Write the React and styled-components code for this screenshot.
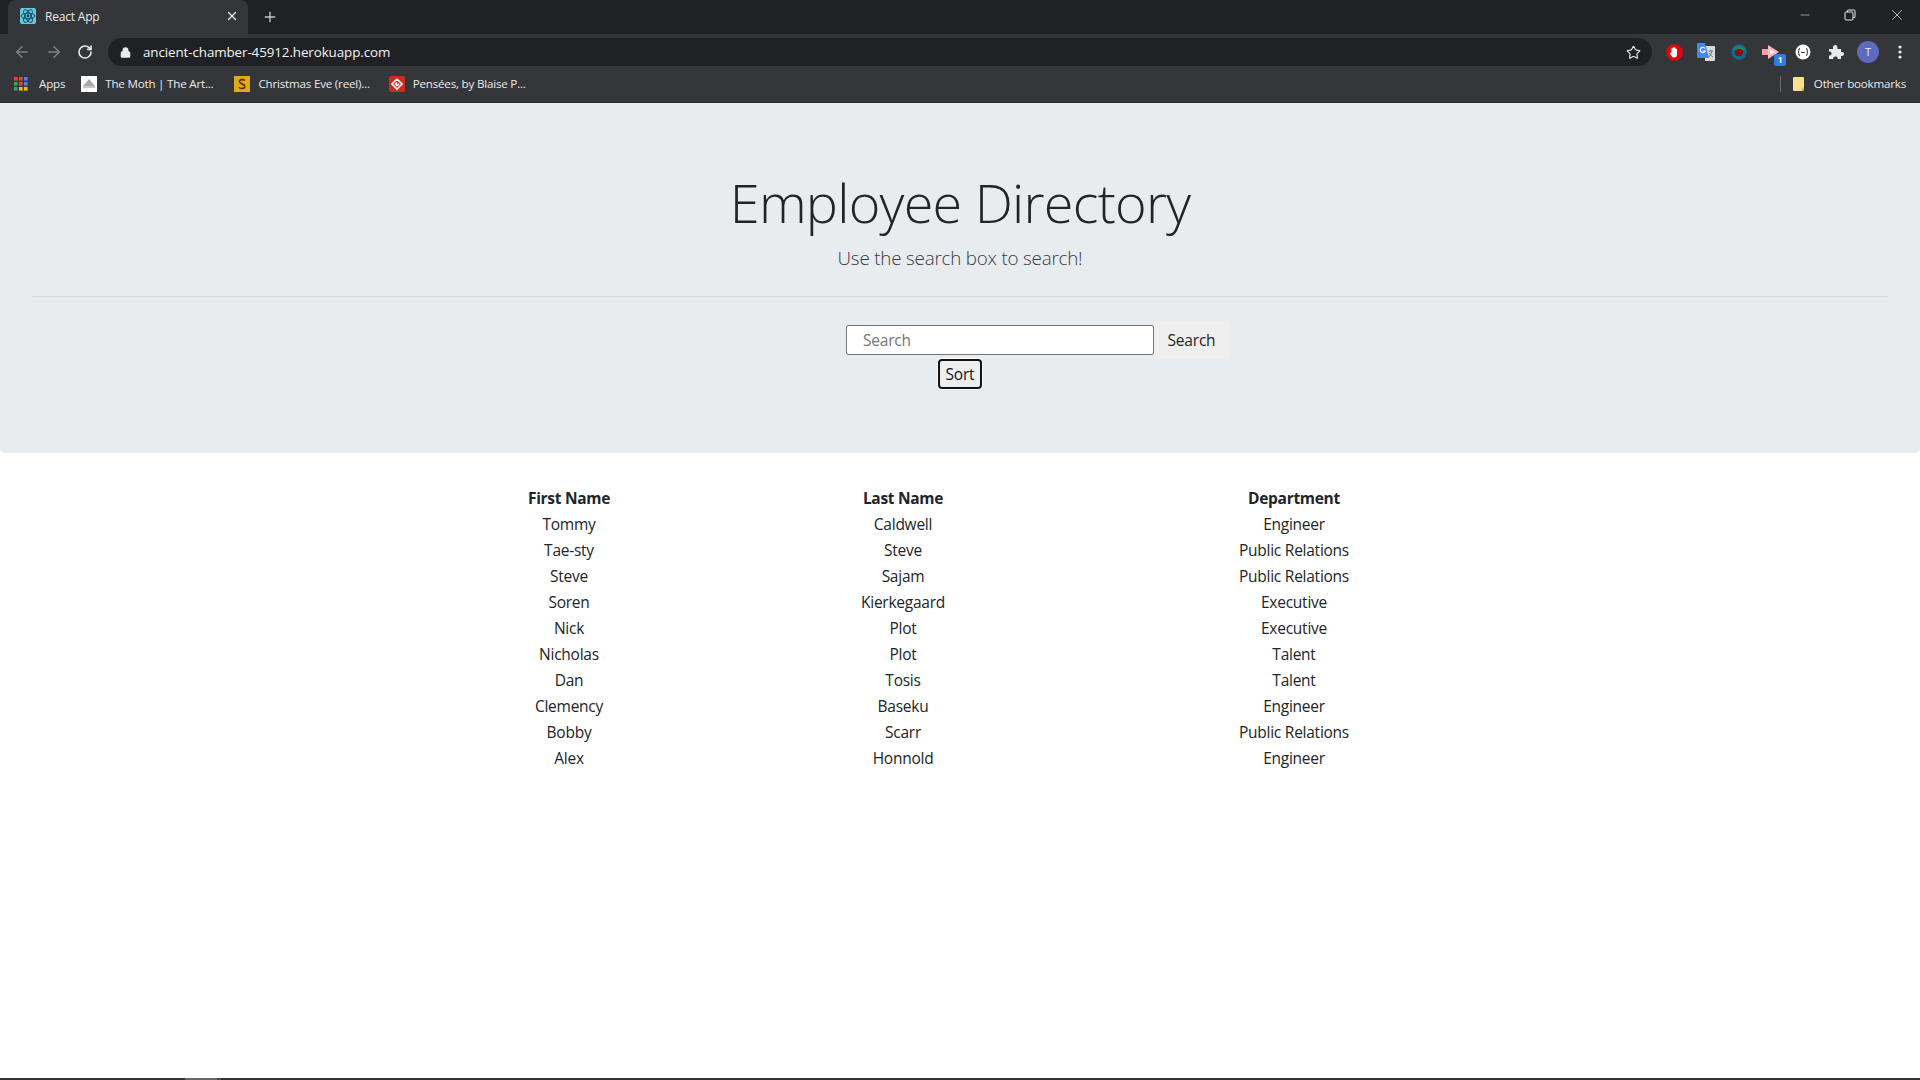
import React from "react";
import styled, { createGlobalStyle } from "styled-components";
import { ArrowLeft, ArrowRight, RotateCw, Lock, Star, Plus, X, Minus } from "lucide-react";

const employees = [
	["Tommy", "Caldwell", "Engineer"],
	["Tae-sty", "Steve", "Public Relations"],
	["Steve", "Sajam", "Public Relations"],
	["Soren", "Kierkegaard", "Executive"],
	["Nick", "Plot", "Executive"],
	["Nicholas", "Plot", "Talent"],
	["Dan", "Tosis", "Talent"],
	["Clemency", "Baseku", "Engineer"],
	["Bobby", "Scarr", "Public Relations"],
	["Alex", "Honnold", "Engineer"],
];

const GlobalStyle = createGlobalStyle`
	html, body {
		margin: 0;
		height: 100%;
		overflow: hidden;
		background: #fff;
	}
	body {
		font-family: "Open Sans", "Noto Sans", sans-serif;
	}
`;

const Page = styled.div`
	height: 1080px;
	display: flex;
	flex-direction: column;
`;

const Browser = styled.header`
	flex: none;
	background: #35363a;
	font-family: "Open Sans", "Noto Sans", sans-serif;
	color: #e8eaed;
`;

const TabStrip = styled.div`
	height: 34px;
	background: #202124;
	display: flex;
	align-items: flex-end;
	padding-left: 8px;
`;

const Tab = styled.div`
	width: 240px;
	height: 34px;
	background: #35363a;
	border-radius: 8px 8px 0 0;
	display: flex;
	align-items: center;
	padding: 0 9px 2px 12px;
	box-sizing: border-box;
	gap: 9px;
`;

const TabTitle = styled.span`
	flex: 1;
	font-size: 12px;
	letter-spacing: -0.2px;
`;

const NewTab = styled.div`
	margin: 0 0 1px 14px;
	height: 33px;
	display: flex;
	align-items: center;
`;

const WindowControls = styled.div`
	margin-left: auto;
	height: 30px;
	display: flex;
	align-items: center;
	gap: 32px;
	padding: 0 14px 4px 0;
	color: #e8eaed;
`;

const Toolbar = styled.div`
	height: 34px;
	box-sizing: border-box;
	display: flex;
	align-items: center;
	padding: 2px 0 0 13px;
`;

const NavButton = styled.div`
	width: ${(p) => (p.$active ? 31 : 32)}px;
	display: flex;
	color: ${(p) => (p.$active ? "#e8eaed" : "#7d7f83")};
`;

const AddressBar = styled.div`
	flex: none;
	width: 1544px;
	height: 28px;
	background: #202124;
	border-radius: 14px;
	display: flex;
	align-items: center;
	padding: 0 11px 0 12px;
	box-sizing: border-box;
`;

const Url = styled.span`
	flex: 1;
	margin-left: 12px;
	font-size: 13.4px;
	letter-spacing: -0.1px;
	color: #f1f3f4;
`;

const Extensions = styled.div`
	flex: none;
	display: grid;
	grid-template-columns: repeat(8, 32.3px);
	justify-items: center;
	align-items: center;
	padding-left: 6px;
`;

const ExtensionBox = styled.span`
	position: relative;
	display: flex;
`;

const CountBadge = styled.span`
	position: absolute;
	right: -6px;
	bottom: -7px;
	width: 12px;
	height: 12px;
	background: #2f7de1;
	border-radius: 2px;
	font-size: 9px;
	line-height: 12px;
	font-weight: 700;
	text-align: center;
	color: #fff;
`;

const Avatar = styled.span`
	width: 22px;
	height: 22px;
	border-radius: 50%;
	background: #5c6bc0;
	font-size: 11px;
	line-height: 22px;
	text-align: center;
	color: #e8eaed;
`;

const BookmarksBar = styled.div`
	height: 31px;
	display: flex;
	align-items: center;
	padding: 0 14px 3px 14px;
	border-bottom: 1px solid #2a2b2e;
	box-sizing: content-box;
	font-size: 11.6px;
	letter-spacing: -0.2px;
`;

const Bookmark = styled.div`
	display: flex;
	align-items: center;
	gap: ${(p) => p.$inner || 8}px;
	margin-right: ${(p) => p.$gap}px;
	white-space: nowrap;
`;

const BarDivider = styled.span`
	margin-left: auto;
	margin-right: 12px;
	width: 1px;
	height: 16px;
	background: #6b6d70;
`;

const Jumbotron = styled.section`
	flex: none;
	height: 350px;
	box-sizing: border-box;
	background: #e9ecef;
	border-radius: 0 0 5px 5px;
	padding: 63px 32px 0;
	text-align: center;
	color: #212529;
`;

const Title = styled.h1`
	margin: 0;
	font-size: 54px;
	line-height: 72px;
	font-weight: 300;
	letter-spacing: -0.75px;
`;

const Lead = styled.p`
	margin: 4px 0 0;
	font-size: 18.8px;
	line-height: 32px;
	font-weight: 300;
	color: #343a40;
	letter-spacing: -0.2px;
`;

const Rule = styled.hr`
	border: 0;
	border-top: 1px solid #d3d7db;
	margin: 22px 0 24px;
`;

const SearchRow = styled.form`
	display: flex;
	justify-content: center;
	align-items: center;
	margin: 0 0 0 155px;
`;

const SearchInput = styled.input`
	width: 308px;
	height: 30px;
	box-sizing: border-box;
	border: 1px solid #767676;
	border-radius: 2px;
	background: #fff;
	padding: 0 16px;
	font: 400 15.5px "Open Sans", sans-serif;
	letter-spacing: -0.2px;
	&::placeholder {
		color: #757575;
		opacity: 1;
	}
`;

const SearchButton = styled.button`
	width: 75px;
	height: 38px;
	padding: 0;
	border: 0;
	border-radius: 4px;
	background: #efefef;
	color: #212529;
	font: 400 15.5px "Open Sans", sans-serif;
	letter-spacing: -0.2px;
`;

const SortButton = styled.button`
	display: block;
	width: 44px;
	height: 30px;
	margin: 0 auto;
	padding: 0;
	box-sizing: border-box;
	border: 2px solid #101214;
	border-radius: 4px;
	background: #efefef;
	color: #101214;
	font: 400 15.5px "Open Sans", sans-serif;
	letter-spacing: -0.2px;
	box-shadow: 0 0 0 1px #fff;
`;

const Directory = styled.table`
	flex: none;
	width: 1116px;
	margin: 32px auto 0;
	table-layout: fixed;
	border-collapse: collapse;
	text-align: center;
	color: #212529;
	font-size: 15.5px;
	letter-spacing: -0.25px;
`;

const HeadCell = styled.th`
	height: 26px;
	padding: 0;
	width: ${(p) => p.$width}px;
	font-weight: 700;
	letter-spacing: -0.3px;
`;

const Cell = styled.td`
	height: 26px;
	padding: 0;
	font-weight: 400;
`;

const Taskbar = styled.footer`
	margin-top: auto;
	height: 2px;
	background: #333;
	display: flex;
	padding-left: 185px;
`;

const TaskbarItem = styled.span`
	width: 32px;
	background: #666;
	border-right: 4px solid #4a4a4a;
`;

function ReactIcon() {
	return (
		<svg width="16" height="16" viewBox="0 0 16 16">
			<rect width="16" height="16" rx="2" fill="#61c9e8" />
			<g fill="none" stroke="#17404f" strokeWidth="0.9">
				<ellipse cx="8" cy="8" rx="7" ry="2.8" />
				<ellipse cx="8" cy="8" rx="7" ry="2.8" transform="rotate(60 8 8)" />
				<ellipse cx="8" cy="8" rx="7" ry="2.8" transform="rotate(120 8 8)" />
			</g>
			<circle cx="8" cy="8" r="1.4" fill="#17404f" />
		</svg>
	);
}

function AppsIcon() {
	const colors = ["#ea4335", "#ea4335", "#4285f4", "#34a853", "#ea4335", "#4285f4", "#34a853", "#fbbc05", "#fbbc05"];
	return (
		<svg width="14" height="14" viewBox="0 0 14 14">
			{colors.map((c, i) => (
				<rect key={i} x={(i % 3) * 5} y={Math.floor(i / 3) * 5} width="3.6" height="3.6" fill={c} />
			))}
		</svg>
	);
}

function MothIcon() {
	return (
		<svg width="16" height="16" viewBox="0 0 16 16">
			<rect width="16" height="16" fill="#fff" />
			<path d="M8 3 L14 10 H2 Z" fill="#a9a9a9" />
			<rect x="2" y="10" width="12" height="2" fill="#c8c8c8" />
		</svg>
	);
}

function SlateIcon() {
	return (
		<svg width="16" height="16" viewBox="0 0 16 16">
			<rect width="16" height="16" fill="#e3a81c" />
			<path d="M11 4.5 C9.5 3 5.5 3.2 5.5 5.5 C5.5 8 10.8 7.8 10.8 10.5 C10.8 13 6.3 13 4.8 11.3" fill="none" stroke="#5a3a08" strokeWidth="1.7" />
		</svg>
	);
}

function PenseesIcon() {
	return (
		<svg width="16" height="16" viewBox="0 0 16 16">
			<rect width="16" height="16" rx="2" fill="#cf2a1f" />
			<path d="M8 3 L13 8 L8 13 L3 8 L8 3 M8 6.5 L6.5 8 L8 9.5 L10 8" fill="none" stroke="#fff" strokeWidth="1.6" />
		</svg>
	);
}

function FolderIcon() {
	return (
		<svg width="12" height="14" viewBox="0 0 12 14">
			<path d="M0 1 Q0 0 1 0 H10 Q11 0 11 1 V12 L10 14 H1 Q0 14 0 13 Z" fill="#fbe08c" />
			<path d="M11 10 V12.5 L10 14 H8.5 V11.5 Z" fill="#e0b93f" />
		</svg>
	);
}

function RestoreIcon() {
	return (
		<svg width="12" height="12" viewBox="0 0 12 12" fill="none" stroke="#e8eaed" strokeWidth="1">
			<rect x="1" y="3" width="8" height="8" rx="1" />
			<path d="M3.5 3 V1.5 Q3.5 1 4 1 H10 Q11 1 11 2 V8 Q11 8.5 10.5 8.5 H9" />
		</svg>
	);
}

function StopHandIcon() {
	return (
		<svg width="17" height="17" viewBox="0 0 17 17">
			<path d="M5.3 0.5 H11.7 L16.5 5.3 V11.7 L11.7 16.5 H5.3 L0.5 11.7 V5.3 Z" fill="#e3060f" />
			<path d="M5.5 8 V4.5 Q6.2 3.7 6.8 4.5 V7.4 V3.4 Q7.5 2.6 8.2 3.4 V7.4 V3.6 Q9 2.9 9.6 3.6 V7.6 V5 Q10.4 4.3 11 5 V10.5 Q11 13.5 8 13.5 Q6.5 13.5 5.5 12 L3.8 9.3 Q4.2 8.3 5 8.9 Z" fill="#fff" />
		</svg>
	);
}

function TranslateIcon() {
	return (
		<svg width="18" height="18" viewBox="0 0 18 18">
			<path d="M8 3 H17 Q18 3 18 4 V17 Q18 18 17 18 H8 Z" fill="#d9d9d9" />
			<path d="M11.5 8 H16 M13.7 7 V8 M15 8 Q14 12 11.8 14 M12.3 10 Q13.5 13 16 14" stroke="#777" strokeWidth="1" fill="none" />
			<path d="M1 0 H8 L12 15 H1 Q0 15 0 14 V1 Q0 0 1 0 Z" fill="#4285f4" />
			<path d="M8 5.5 A2.6 2.6 0 1 0 8.2 8 H5.8" fill="none" stroke="#fff" strokeWidth="1.2" />
		</svg>
	);
}

function RingIcon() {
	return (
		<svg width="16" height="16" viewBox="0 0 16 16">
			<circle cx="8" cy="8" r="6" fill="none" stroke="#0e6a94" strokeWidth="3.4" />
			<path d="M1.8 6 A7 7 0 0 1 14.2 6 Z" fill="#1f8a5b" />
			<circle cx="8" cy="8.4" r="3.6" fill="#8b0f14" />
		</svg>
	);
}

function PinkArrowIcon() {
	return (
		<svg width="18" height="14" viewBox="0 0 18 14">
			<rect x="0" y="4" width="7" height="6" fill="#ff9ea3" />
			<path d="M6 0 L17 7 L6 14 Z" fill="#ffb8bb" />
			<path d="M8 5 L13 7 L8 9 Z" fill="#fff" />
		</svg>
	);
}

function CodeCircleIcon() {
	return (
		<svg width="16" height="16" viewBox="0 0 16 16">
			<circle cx="8" cy="8" r="7.5" fill="#fff" />
			<path d="M5 4.5 Q3.5 4.5 3.8 6.5 Q4 8 3 8 Q4 8 3.8 9.5 Q3.5 11.5 5 11.5 M11 4.5 Q12.5 4.5 12.2 6.5 Q12 8 13 8 Q12 8 12.2 9.5 Q12.5 11.5 11 11.5" fill="none" stroke="#222" strokeWidth="1" />
			<path d="M6.3 8.5 H9.7" stroke="#222" strokeWidth="1" />
		</svg>
	);
}

function PuzzleIcon() {
	return (
		<svg width="16" height="16" viewBox="0 0 16 16">
			<path d="M1 5 H5 Q4.6 1 7.2 1 Q9.8 1 9.4 5 H13 V8 Q16 7.4 16 10 Q16 12.6 13 12 V15 H9.6 Q10 12.6 7.5 12.6 Q5 12.6 5.4 15 H1 V11.5 Q3.6 12 3.6 9.5 Q3.6 7 1 7.5 Z" fill="#e8eaed" />
		</svg>
	);
}

function DotsIcon() {
	return (
		<svg width="4" height="14" viewBox="0 0 4 14" fill="#e8eaed">
			<circle cx="2" cy="2" r="1.6" />
			<circle cx="2" cy="7" r="1.6" />
			<circle cx="2" cy="12" r="1.6" />
		</svg>
	);
}

export default function App() {
	return (
		<Page>
			<GlobalStyle />
			<Browser>
				<TabStrip>
					<Tab>
						<ReactIcon />
						<TabTitle>React App</TabTitle>
						<X size={14} strokeWidth={2.2} />
					</Tab>
					<NewTab>
						<Plus size={16} strokeWidth={2} color="#c4c6c9" />
					</NewTab>
					<WindowControls>
						<Minus size={14} strokeWidth={1} />
						<RestoreIcon />
						<X size={18} strokeWidth={1} />
					</WindowControls>
				</TabStrip>
				<Toolbar>
					<NavButton>
						<ArrowLeft size={18} strokeWidth={2} />
					</NavButton>
					<NavButton>
						<ArrowRight size={18} strokeWidth={2} />
					</NavButton>
					<NavButton $active>
						<RotateCw size={16} strokeWidth={2.4} />
					</NavButton>
					<AddressBar>
						<Lock size={11} strokeWidth={3} fill="#e8eaed" />
						<Url>ancient-chamber-45912.herokuapp.com</Url>
						<Star size={15} strokeWidth={1.8} />
					</AddressBar>
					<Extensions>
						<StopHandIcon />
						<TranslateIcon />
						<RingIcon />
						<ExtensionBox>
							<PinkArrowIcon />
							<CountBadge>1</CountBadge>
						</ExtensionBox>
						<CodeCircleIcon />
						<PuzzleIcon />
						<Avatar>T</Avatar>
						<DotsIcon />
					</Extensions>
				</Toolbar>
				<BookmarksBar>
					<Bookmark $gap={16} $inner={11}>
						<AppsIcon />
						Apps
					</Bookmark>
					<Bookmark $gap={21}>
						<MothIcon />
						The Moth | The Art...
					</Bookmark>
					<Bookmark $gap={19}>
						<SlateIcon />
						Christmas Eve (reel)...
					</Bookmark>
					<Bookmark $gap={0}>
						<PenseesIcon />
						Pensées, by Blaise P...
					</Bookmark>
					<BarDivider />
					<Bookmark $gap={0} $inner={9}>
						<FolderIcon />
						Other bookmarks
					</Bookmark>
				</BookmarksBar>
			</Browser>
			<Jumbotron>
				<Title>Employee Directory</Title>
				<Lead>Use the search box to search!</Lead>
				<Rule />
				<SearchRow onSubmit={(e) => e.preventDefault()}>
					<SearchInput placeholder="Search" />
					<SearchButton>Search</SearchButton>
				</SearchRow>
				<SortButton>Sort</SortButton>
			</Jumbotron>
			<Directory>
				<thead>
					<tr>
						<HeadCell $width={334}>First Name</HeadCell>
						<HeadCell $width={334}>Last Name</HeadCell>
						<HeadCell $width={448}>Department</HeadCell>
					</tr>
				</thead>
				<tbody>
					{employees.map((row, id) => (
						<tr key={id}>
							{row.map((value, col) => (
								<Cell key={col}>{value}</Cell>
							))}
						</tr>
					))}
				</tbody>
			</Directory>
			<Taskbar>
				<TaskbarItem />
			</Taskbar>
		</Page>
	);
}
